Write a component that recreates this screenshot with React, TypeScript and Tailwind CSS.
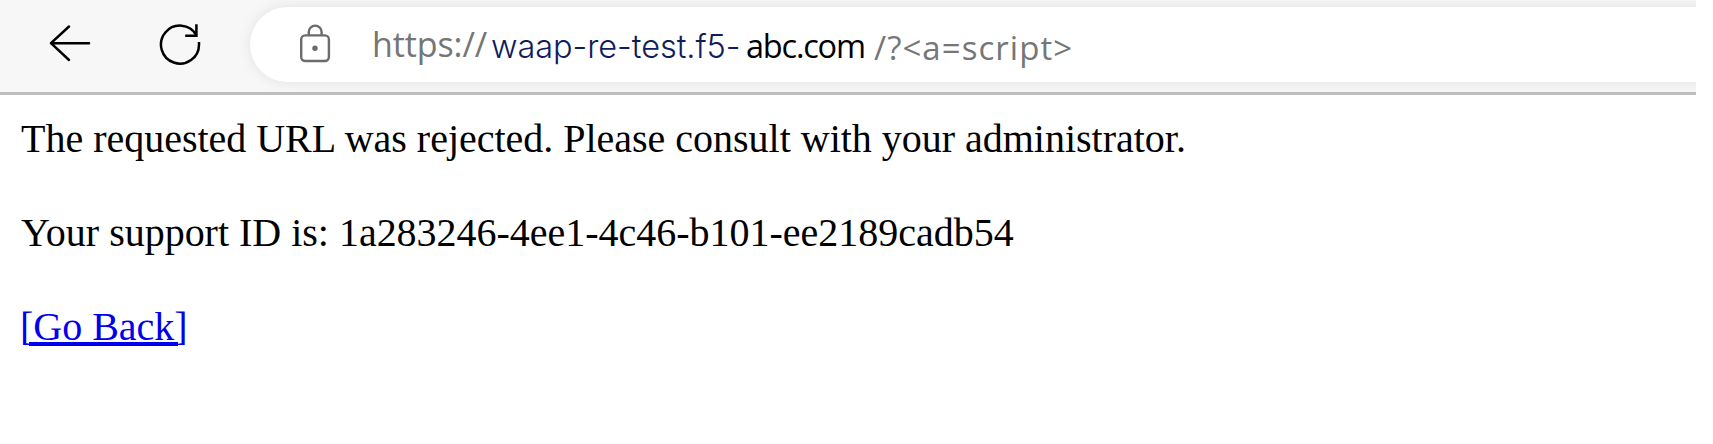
import React from "react";

function BackIcon() {
  return (
    <svg className="h-[44px] w-[44px]" viewBox="48 22 44 44" fill="none" stroke="#000" strokeWidth="2.5" strokeLinecap="round" strokeLinejoin="round">
      <path d="M89 43.2H51M69 26.5L51 43.2L69 60" />
    </svg>
  );
}

function ReloadIcon() {
  return (
    <svg className="h-[44px] w-[44px]" viewBox="158 22 44 44" fill="none" stroke="#000" strokeWidth="2.5">
      <path d="M199 42V44.4A19 19 0 1 1 196.4 35" />
      <path d="M196.4 24.3V35.8H185.2" />
    </svg>
  );
}

function LockIcon() {
  return (
    <svg className="h-[44px] w-[36px]" viewBox="297 22 36 44" fill="none" stroke="#6b6b6b" strokeWidth="2.4">
      <rect x="301.2" y="35.4" width="27.7" height="25.6" rx="4" />
      <path d="M308.8 35V32A6.4 6.4 0 0 1 321.6 32V35" />
      <circle cx="315" cy="48.2" r="2.7" fill="#6b6b6b" stroke="none" />
    </svg>
  );
}

export default function App() {
  return (
    <div className="h-[444px] w-full overflow-hidden bg-white">
      <header className="flex h-[95px] w-[1696px] overflow-hidden border-b-[3px] border-[#bebebe] bg-[#f7f7f7]">
        <div className="flex w-[250px] shrink-0 gap-[66px] pt-[22px] pl-[48px]">
          <button className="h-[44px]"><BackIcon /></button>
          <button className="h-[44px]"><ReloadIcon /></button>
        </div>
        <div className="mt-[7px] flex h-[75px] w-[1500px] shrink-0 rounded-l-full bg-white pt-[15px] pl-[47px] shadow-[0_0_14px_rgba(0,0,0,0.09)]">
          <LockIcon />
          <div className="ml-[39px] flex items-start font-['Open_Sans',sans-serif] text-[34px] leading-[44px] whitespace-pre">
            <span className="w-[119px] tracking-[-0.1px] text-[#767676]">https://</span>
            <span className="w-[255px] pt-[3px] font-['Inter',sans-serif] text-[32.5px] font-[350] tracking-[-0.05px] text-[#101d5c]">waap-re-test.f5-</span>
            <span className="w-[128px] pt-[2px] text-[32.5px] tracking-[-1.2px] text-black">abc.com</span>
            <span className="pt-[4px] text-[33px] tracking-[1.05px] text-[#767676]">/?&lt;a=script&gt;</span>
          </div>
        </div>
      </header>
      <main className="flex flex-col gap-[48px] pt-[21px] pl-[21px] font-['Liberation_Serif',serif] text-[40px] leading-[46px] tracking-[-0.015px] text-black">
        <p>The requested URL was rejected. Please consult with your administrator.</p>
        <p>Your support ID is: 1a283246-4ee1-4c46-b101-ee2189cadb54</p>
        <p className="h-[46px]">
          <a className="-ml-px text-[#0000ee]" href="#">
            [<span className="-mx-[4px] inline-block border-b-4 border-[#0000ee] px-[4px] leading-[31px]">Go Back</span>]
          </a>
        </p>
      </main>
    </div>
  );
}
